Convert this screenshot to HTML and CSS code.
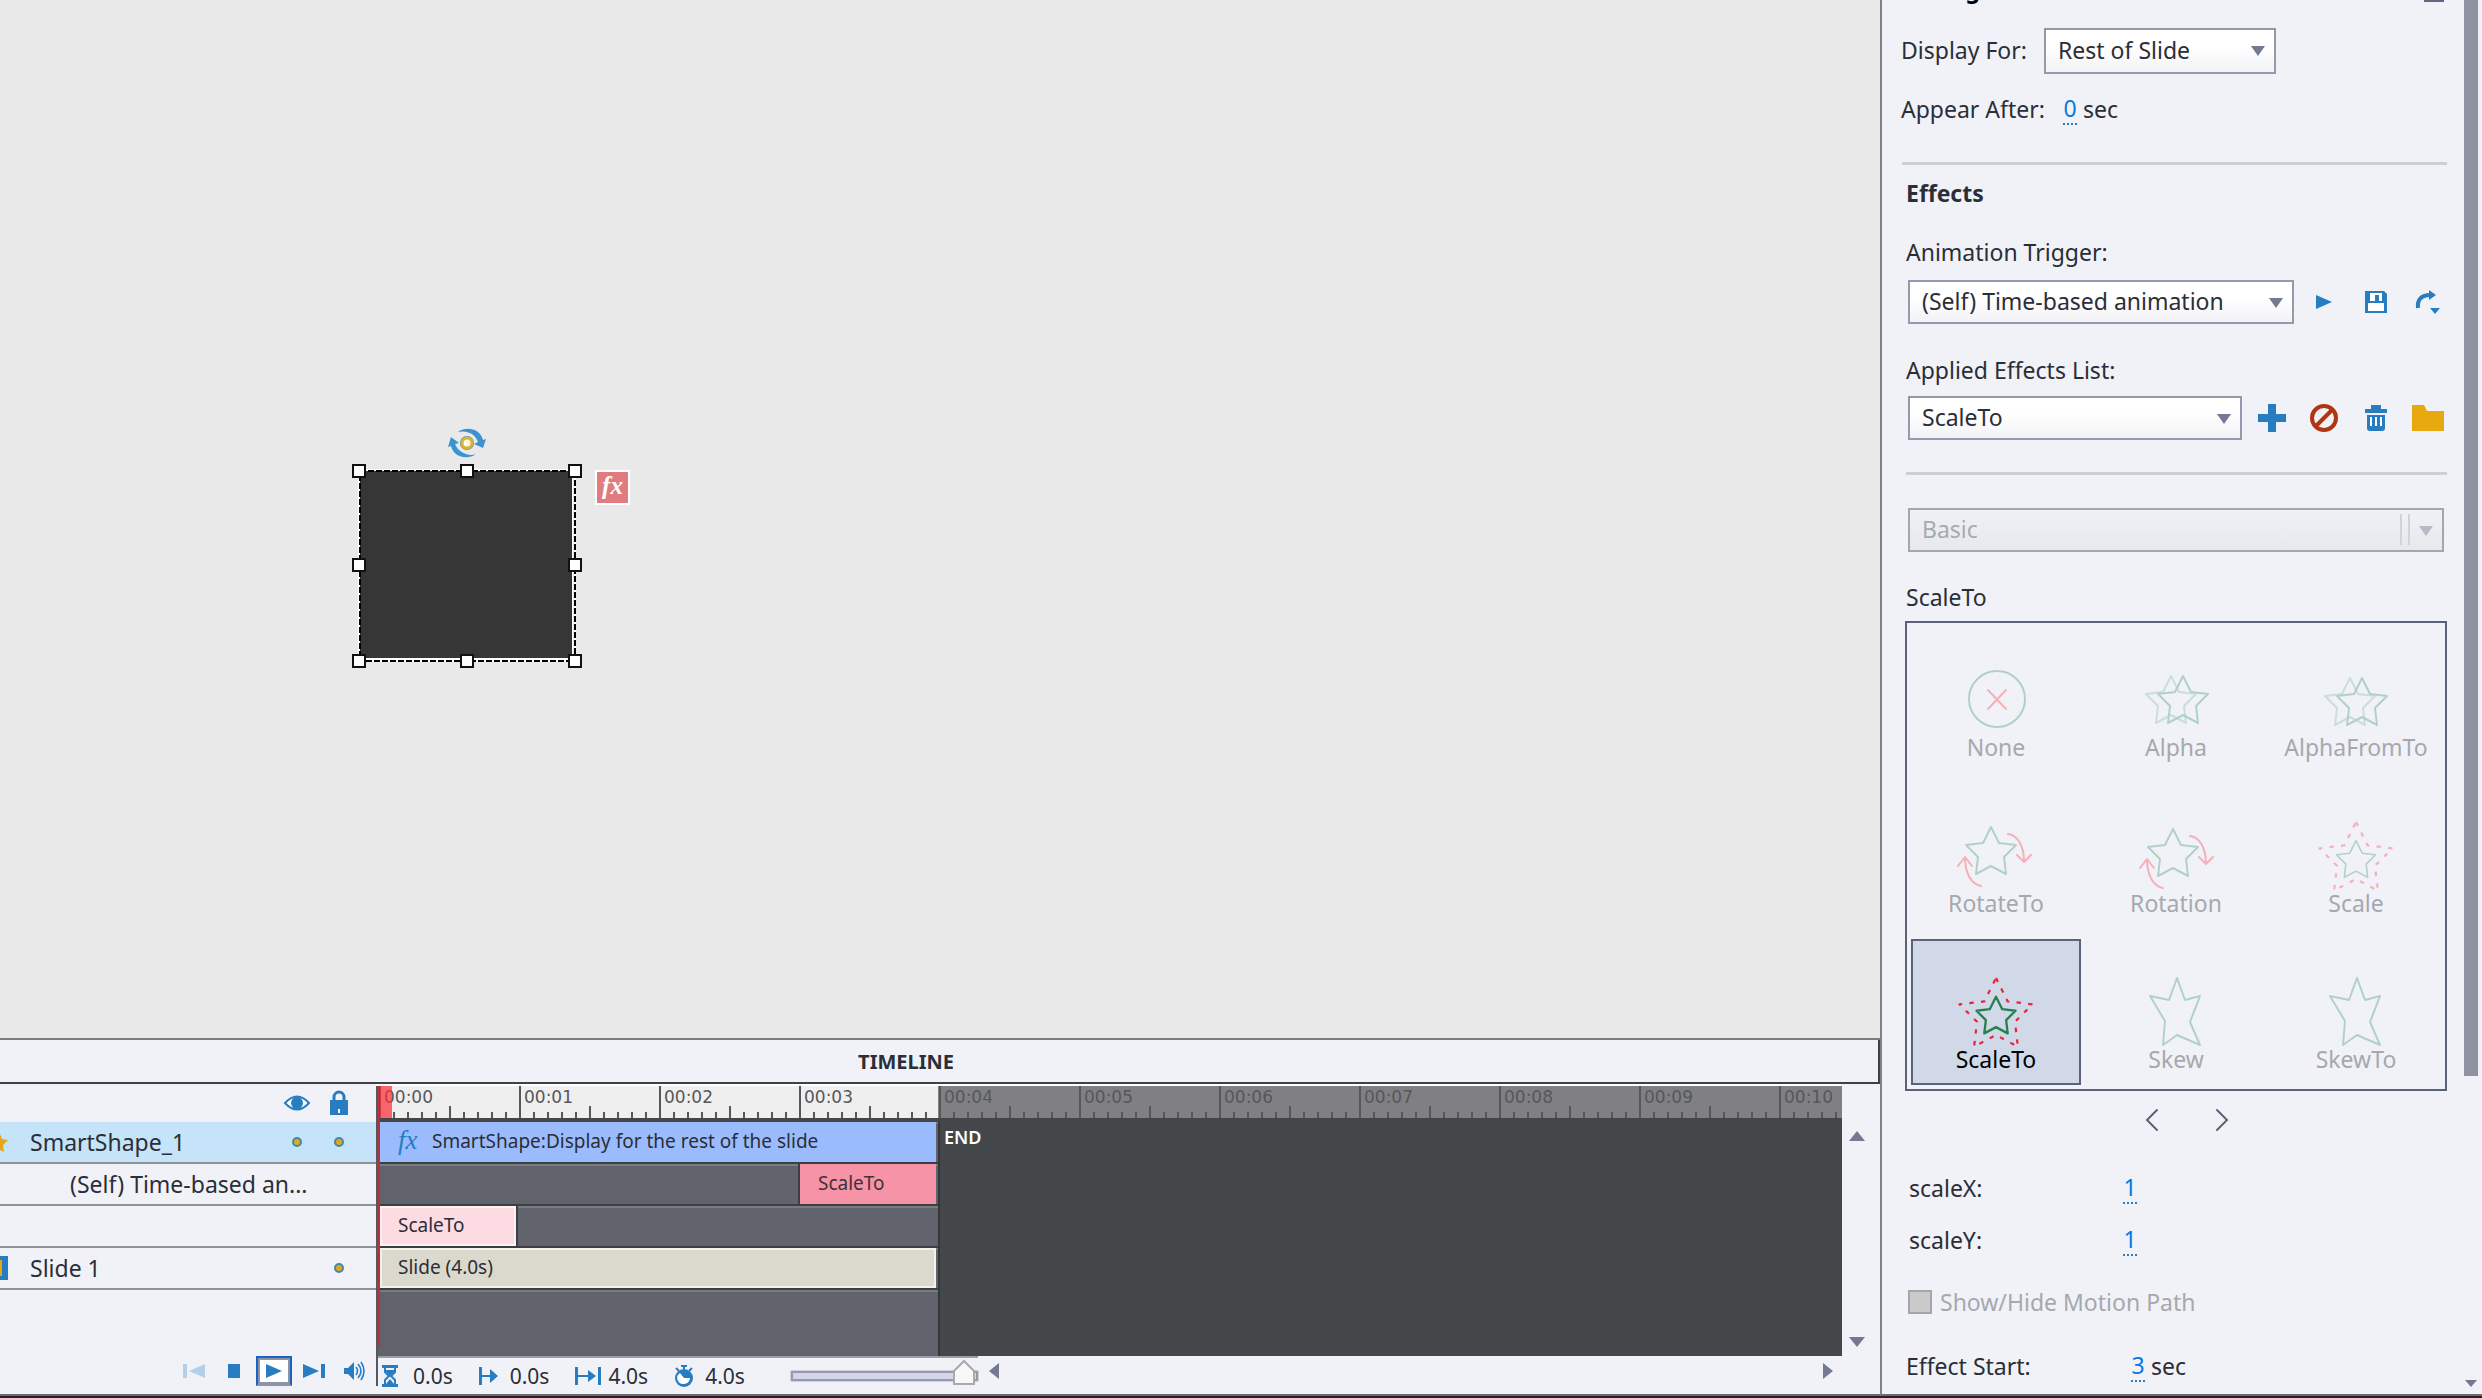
FILE: index.html
```html
<!DOCTYPE html>
<html lang="en">
<head>
<meta charset="utf-8">
<title>Slide editor</title>
<link rel="stylesheet" href="styles.css">
</head>
<body>
<svg class="defs" aria-hidden="true">
  <defs>
    <path id="star" d="M0-26 8-10 25-8 13 4 15 21 0 13-15 21-13 4-25-8-8-10Z"/>
    <g id="spin">
      <path d="M57 49C66 50 73 60 73 77M66 70l7 7 7-7M30 101C20 99 14 88 14 72M7 81l7-9 7 9"/>
    </g>
    <path id="skew" d="M46 37 54 59 69 55 59 81 69 104 46 94 32 104 34 80 19 55 38 59Z"/>
  </defs>
</svg>
<div class="app">
  <main class="workspace">
    <section class="stage">
      <div class="shape">
        <svg class="shape-frame" viewBox="0 0 244 250" aria-hidden="true">
          <rect x="9" y="52" width="215" height="190" fill="#fff"/>
          <rect x="11" y="53" width="212" height="187" fill="#363636"/>
          <rect x="10" y="52" width="216" height="191" fill="none" stroke="#fff" stroke-width="2"/>
          <rect x="11" y="53" width="215" height="190" fill="none" stroke="#000" stroke-width="2" stroke-dasharray="6 2"/>
          <g fill="#fff" stroke="#111" stroke-width="2">
            <rect x="4" y="47" width="12" height="12"/><rect x="112" y="47" width="12" height="12"/><rect x="220" y="47" width="12" height="12"/>
            <rect x="4" y="141" width="12" height="12"/><rect x="220" y="141" width="12" height="12"/>
            <rect x="4" y="237" width="12" height="12"/><rect x="112" y="237" width="12" height="12"/><rect x="220" y="237" width="12" height="12"/>
          </g>
          <g fill="#3b93cf">
            <path d="M109 14c8-6 22-4 25 8l3-1-3 9-9-4 4-2c-3-9-12-12-20-10z"/>
            <path d="M127 36c-8 6-22 4-25-8l-3 1 3-10 8 6-4 1c3 8 13 13 21 10z"/>
          </g>
          <circle cx="118" cy="25" r="5" fill="#fff" stroke="#4d97bf" stroke-width="4"/>
          <circle cx="118" cy="25" r="5" fill="#fffbe6" stroke="#e0b034" stroke-width="3"/>
        </svg>
        <span class="fx-badge">fx</span>
      </div>
    </section>

    <section class="timeline">
      <h2 class="timeline-title">TIMELINE</h2>
      <div class="timeline-body">
        <div class="layers">
          <div class="layers-head">
            <svg width="26" height="16" viewBox="0 0 26 16"><path d="M1 8Q13-5 25 8 13 21 1 8Z" fill="#fff" stroke="#287dc1" stroke-width="2"/><circle cx="13" cy="8" r="6" fill="#287dc1"/></svg>
            <svg width="18" height="24" viewBox="0 0 18 24"><path d="M4 10V6a5 5 0 0 1 10 0v4" fill="none" stroke="#287dc1" stroke-width="3"/><path d="M0 9h18v15H0z" fill="#287dc1"/><path d="M8 18h2v4H8z" fill="#fff"/></svg>
          </div>
          <div class="layer is-selected">
            <svg class="layer-icon" width="8" height="24" viewBox="0 0 8 24"><path d="M0 4 2 9l6 1-5 5 1 7-4-2z" fill="#e6a817"/></svg>
            <span class="layer-name">SmartShape_1</span><i class="dot"></i><i class="dot"></i>
          </div>
          <div class="layer layer-child"><span class="layer-name">(Self) Time-based an...</span></div>
          <div class="layer"></div>
          <div class="layer">
            <svg class="layer-icon" width="8" height="24" viewBox="0 0 8 24"><path d="M0 0h8v24H0z" fill="#287dc1"/><path d="M0 4h2v16H0z" fill="#e6a817"/></svg>
            <span class="layer-name">Slide 1</span><i class="dot"></i>
          </div>
          <div class="transport">
            <button class="t-btn" disabled aria-label="First frame"><svg width="22" height="14" viewBox="0 0 22 14"><path d="M0 0h4v14H0zM22 0v14L6 7z" fill="#b5cfe8"/></svg></button>
            <button class="t-btn" aria-label="Stop"><svg width="12" height="14" viewBox="0 0 12 14"><path d="M0 0h12v14H0z" fill="#287dc1"/></svg></button>
            <button class="t-btn is-focus" aria-label="Play"><svg width="16" height="14" viewBox="0 0 16 14"><path d="M0 0v14l16-7z" fill="#287dc1"/></svg></button>
            <button class="t-btn" aria-label="Last frame"><svg width="22" height="14" viewBox="0 0 22 14"><path d="M18 0h4v14h-4zM0 0v14l16-7z" fill="#287dc1"/></svg></button>
            <button class="t-btn" aria-label="Audio"><svg width="21" height="18" viewBox="0 0 21 18"><path d="M0 6h4l6-6v18l-6-6H0z" fill="#287dc1"/><path d="M12 5q3 4 0 8M14 2q6 7 0 14M17 0q6 9 0 18" fill="none" stroke="#287dc1" stroke-width="1.6"/></svg></button>
          </div>
        </div>

        <div class="tracks">
          <div class="ruler">
            <span>00:00</span><span>00:01</span><span>00:02</span><span>00:03</span><span>00:04</span><span>00:05</span><span>00:06</span><span>00:07</span><span>00:08</span><span>00:09</span><span>00:10</span>
          </div>
          <div class="lanes">
            <div class="lane-stack">
              <div class="lane"><div class="clip clip-shape" style="--start:0;--length:4"><span class="fx">fx</span>SmartShape:Display for the rest of the slide</div></div>
              <div class="lane"><div class="clip clip-effect" style="--start:3;--length:1">ScaleTo</div></div>
              <div class="lane"><div class="clip clip-effect-light" style="--start:0;--length:1">ScaleTo</div></div>
              <div class="lane"><div class="clip clip-slide" style="--start:0;--length:4">Slide (4.0s)</div></div>
              <div class="lane lane-rest"></div>
            </div>
            <span class="end">END</span>
          </div>
          <div class="status">
            <div class="status-info">
              <span class="stat"><svg width="24" height="22" viewBox="0 0 24 22"><path d="M0 0h16v3H0zM0 19h16v3H0z" fill="#287dc1"/><path d="M3 3v4l4 4-4 4v4M13 3v4l-4 4 4 4v4" fill="none" stroke="#287dc1" stroke-width="2"/><path d="M4 5h8v2l-4 4-4-4zM8 14l4 5H4z" fill="#287dc1"/></svg>0.0s</span>
              <span class="stat"><svg width="24" height="18" viewBox="0 0 24 18"><path d="M0 0h3v18H0zM3 8h8V2l8 7-8 7v-6H3z" fill="#287dc1"/></svg>0.0s</span>
              <span class="stat"><svg width="26" height="18" viewBox="0 0 26 18"><path d="M0 0h3v18H0zM23 0h3v18h-3zM3 8h10V3l8 6-8 6v-5H3z" fill="#287dc1"/></svg>4.0s</span>
              <span class="stat"><svg width="24" height="22" viewBox="0 0 24 22"><path d="M7 0h6v2H11v2H9V2H7z" fill="#287dc1"/><path d="m2 3 3 3M18 3l-3 3" stroke="#287dc1" stroke-width="2"/><circle cx="10" cy="13" r="9" fill="#287dc1"/><path d="M10 13h6a6 6 0 0 1-6 6 6 6 0 0 1-4-11z" fill="#fff"/></svg>4.0s</span>
              <input class="zoom" type="range" min="0" max="100" value="100" aria-label="Timeline zoom">
            </div>
            <div class="hscroll">
              <button class="arrow arrow-left" aria-label="Scroll left"></button>
              <button class="arrow arrow-right" aria-label="Scroll right"></button>
            </div>
          </div>
          <div class="playhead"></div>
        </div>

        <div class="vscroll">
          <button class="arrow arrow-up" aria-label="Scroll up"></button>
          <button class="arrow arrow-down" aria-label="Scroll down"></button>
        </div>
      </div>
    </section>
  </main>

  <aside class="panel">
    <div class="panel-content">
      <div class="panel-title"><h3>Timing</h3><button class="collapse" aria-label="Collapse"></button></div>
      <div class="row display-row">
        <label for="display-for">Display For:</label>
        <span class="select select-display"><select id="display-for"><option>Rest of Slide</option></select></span>
      </div>
      <div class="row appear-row">
        <label for="appear-after">Appear After:</label>
        <span class="value"><input id="appear-after" value="0"> sec</span>
      </div>
      <hr>
      <div class="effects">
        <h3>Effects</h3>
        <label class="trigger-label" for="trigger">Animation Trigger:</label>
        <div class="row tools trigger-row">
          <span class="select select-trigger"><select id="trigger"><option>(Self) Time-based animation</option></select></span>
          <button aria-label="Preview"><svg width="16" height="14" viewBox="0 0 16 14"><path d="M0 0v14l16-7z" fill="#287dc1"/></svg></button>
          <button aria-label="Save"><svg width="22" height="22" viewBox="0 0 22 22"><path d="M0 0h19l3 3v19H0z" fill="#287dc1"/><path d="M5 2h12v8H5zM3 12h16v8H3z" fill="#fff"/><path d="M10 4h4v6h-4z" fill="#287dc1"/></svg></button>
          <button aria-label="Reset"><svg width="24" height="24" viewBox="0 0 24 24"><path d="M2 18C1 9 6 5 14 5" fill="none" stroke="#287dc1" stroke-width="4"/><path d="M13 0l7 5-7 5zM14 18h10l-5 6z" fill="#287dc1"/></svg></button>
        </div>
        <label class="applied-label" for="applied">Applied Effects List:</label>
        <div class="row tools applied-row">
          <span class="select select-applied"><select id="applied"><option>ScaleTo</option></select></span>
          <button aria-label="Add"><svg width="28" height="28" viewBox="0 0 28 28"><path d="M10 0h8v10h10v8H18v10h-8V18H0v-8h10z" fill="#287dc1"/></svg></button>
          <button aria-label="Remove"><svg width="28" height="28" viewBox="0 0 28 28"><g fill="none" stroke="#b1360f" stroke-width="4"><circle cx="14" cy="14" r="12"/><path d="M22 6 6 22"/></g></svg></button>
          <button aria-label="Delete"><svg width="22" height="26" viewBox="0 0 22 26"><path d="M6 0h10v4h6v4H0V4h6zM2 10h18v13q0 3-3 3H5q-3 0-3-3z" fill="#287dc1"/><path d="M5 12h2v9H5zM10 12h2v9h-2zM15 12h2v9h-2z" fill="#fff"/></svg></button>
          <button aria-label="Browse"><svg width="32" height="26" viewBox="0 0 32 26"><path d="M0 0h12l3 6h17v20H0z" fill="#e6aa10"/></svg></button>
        </div>
        <hr class="hr-inner">
        <span class="select select-basic is-disabled"><select disabled aria-label="Category"><option>Basic</option></select></span>
        <p class="effect-name">ScaleTo</p>
        <div class="gallery">
          <button class="effect" disabled><svg viewBox="0 0 90 102"><circle class="g" cx="46" cy="70" r="28"/><path class="r" d="m37 61 18 19M55 61 37 80"/></svg>None</button>
          <button class="effect" disabled><svg viewBox="0 0 90 102"><use class="g faint" href="#star" x="40" y="73"/><use class="g" href="#star" x="52" y="73"/></svg>Alpha</button>
          <button class="effect" disabled><svg viewBox="0 0 90 102"><use class="g faint" href="#star" x="39" y="75"/><use class="g" href="#star" x="51" y="75"/></svg>AlphaFromTo</button>
          <button class="effect" disabled><svg viewBox="0 0 90 102"><use class="g" href="#star" x="40" y="68"/><use class="r" href="#spin"/></svg>RotateTo</button>
          <button class="effect" disabled><svg viewBox="0 0 90 102"><use class="g" href="#star" x="42" y="70"/><use class="r" href="#spin" x="2" y="2"/></svg>Rotation</button>
          <button class="effect" disabled><svg viewBox="0 0 90 102"><use class="g" href="#star" transform="translate(45 76) scale(.78)"/><use class="r dash" href="#star" transform="translate(45 75) scale(1.46)"/></svg>Scale</button>
          <button class="effect is-active"><svg viewBox="0 0 90 102"><use class="g" href="#star" transform="translate(45 76) scale(.78)"/><use class="r dash" href="#star" transform="translate(45 75) scale(1.46)"/></svg>ScaleTo</button>
          <button class="effect" disabled><svg viewBox="0 0 90 102"><use class="g" href="#skew"/></svg>Skew</button>
          <button class="effect" disabled><svg viewBox="0 0 90 102"><use class="g" href="#skew"/></svg>SkewTo</button>
        </div>
        <div class="pager">
          <button aria-label="Previous"><svg width="12" height="22" viewBox="0 0 12 22"><path d="M11 1 1 11l10 10"/></svg></button>
          <button aria-label="Next"><svg width="12" height="22" viewBox="0 0 12 22"><path d="m1 1 10 10L1 21"/></svg></button>
        </div>
        <div class="row param param-x"><label for="sx">scaleX:</label><span class="value"><input id="sx" value="1"></span></div>
        <div class="row param param-y"><label for="sy">scaleY:</label><span class="value"><input id="sy" value="1"></span></div>
        <label class="row motion"><input type="checkbox" disabled>Show/Hide Motion Path</label>
        <div class="row start"><label for="start">Effect Start:</label><span class="value"><input id="start" value="3"> sec</span></div>
      </div>
    </div>
    <div class="panel-scroll">
      <div class="thumb"></div>
      <button class="arrow arrow-tiny" aria-label="Scroll down"></button>
    </div>
  </aside>
</div>
</body>
</html>
```
FILE: styles.css
```css
* { box-sizing: border-box; }
body {
  margin: 0;
  background: #f0f2f8;
  color: #2b2e36;
  font: 23px/32px "Noto Sans", "Open Sans", sans-serif;
}
h2, h3, p { margin: 0; font-size: inherit; }
svg { display: block; flex: none; overflow: visible; }
button, input, select { font: inherit; color: inherit; }
button { display: flex; align-items: center; justify-content: center; padding: 0; border: 0; background: none; }
.defs { position: absolute; width: 0; height: 0; }

.app {
  display: grid;
  grid-template-columns: minmax(0, 1fr) 602px;
  height: 100vh;
  overflow: hidden;
  border-bottom: 2px solid #20232f;
}
.workspace { display: flex; flex-direction: column; min-height: 0; border-bottom: 2px solid #6a6c72; }

/* Stage */
.stage { flex: 1; position: relative; background: #e9e9e9; }
.shape { position: absolute; left: 349px; top: 418px; width: 244px; height: 250px; }
.shape-frame { width: 244px; height: 250px; }
.fx-badge {
  position: absolute; left: 246px; top: 52px;
  width: 35px; height: 35px;
  border: 2px solid #fff;
  background: #e07c80;
  color: #fff;
  font: italic bold 25px/27px "Liberation Serif", serif;
  text-align: center;
}

/* Timeline */
.timeline { border-top: 2px solid #7c7c7e; }
.timeline-title {
  height: 44px;
  padding-right: 66px;
  border-bottom: 2px solid #3e4146;
  border-right: 2px solid #3e4146;
  font-size: 20px;
  line-height: 44px;
  text-align: center;
}
.timeline-body { display: grid; grid-template-columns: 376px minmax(0, 1fr) 38px; height: 310px; }
.layers { display: flex; flex-direction: column; }
.layers-head { display: flex; align-items: center; justify-content: flex-end; gap: 20px; height: 38px; padding-right: 28px; }
.layer {
  display: flex; align-items: center;
  height: 42px;
  padding-right: 32px;
  border-bottom: 2px solid #8f9296;
}
.layer.is-selected { background: #c5e3f9; }
.layer-name { flex: 1; padding-left: 22px; }
.layer-child .layer-name { padding-left: 70px; }
.dot { width: 10px; height: 10px; margin-left: 32px; border: 2px solid #4388a8; border-radius: 50%; background: #e0a820; }
.transport { display: flex; align-items: center; gap: 4px; height: 30px; margin-top: 66px; padding-left: 176px; }
.t-btn { width: 36px; height: 30px; }
.t-btn.is-focus { border: 2px solid #1c60c0; border-bottom: 2px solid #8f93a8; box-shadow: inset 0 0 0 2px #8f93a8; background: #fff; }

.tracks { position: relative; display: flex; flex-direction: column; }
.tracks::before { content: ""; position: absolute; left: 0; top: 2px; width: 2px; height: 300px; background: #55585e; }
.ruler {
  display: flex;
  height: 38px;
  padding-left: 3px;
  overflow: hidden;
  border-top: 2px solid #fff;
  border-bottom: 4px solid #444649;
  background:
    repeating-linear-gradient(90deg, #55575a 0 2px, transparent 2px 140px) 3px 0 / 100% 32px no-repeat,
    repeating-linear-gradient(90deg, #55575a 0 2px, transparent 2px 70px) 3px 20px / 100% 12px no-repeat,
    repeating-linear-gradient(90deg, #55575a 0 2px, transparent 2px 14px) 3px 26px / 100% 6px no-repeat,
    linear-gradient(90deg, #efefef 0 562px, #808082 562px);
  background-clip: padding-box;
  color: #55575b;
  font: 17px/22px "DejaVu Sans", sans-serif;
}
.ruler span { flex: 0 0 140px; padding-left: 5px; }
.lanes { display: flex; height: 234px; background: #43474a; }
.lane-stack { flex: 0 0 564px; padding-left: 4px; background: #60636b; border-right: 2px solid #33373c; display: flex; flex-direction: column; }
.lane { height: 42px; border-bottom: 2px solid #3b3e43; box-shadow: inset 0 2px #7a7d80; }
.lane-rest { flex: 1; border: 0; }
.clip {
  display: flex; align-items: center;
  height: 40px;
  margin-left: calc(var(--start) * 140px);
  width: calc(var(--length) * 140px - 4px);
  padding: 0 0 2px 18px;
  font-size: 19px;
  white-space: nowrap;
}
.clip-shape { background: #9abcff; }
.clip-effect { background: #f693a7; color: #43303a; box-shadow: -2px 0 #3b3e43; }
.clip-effect-light { background: #fcdbe2; box-shadow: inset 0 0 0 2px #fff0f3, 2px 0 #3b3e43; }
.clip-slide { background: #dbd8cd; box-shadow: inset 0 0 0 2px #f2f1ec; }
.fx { width: 34px; padding-bottom: 2px; color: #287dc1; font: italic 27px/28px "Liberation Serif", serif; }
.end { padding-left: 4px; color: #fff; font-size: 18px; line-height: 30px; font-weight: 600; }
.playhead { position: absolute; left: 2px; top: 2px; width: 14px; height: 32px; background: #ff2a35b3; }
.playhead::after { content: ""; position: absolute; left: 0; top: 0; width: 2px; height: 260px; background: #b8303a; }

.status { display: flex; height: 38px; font-size: 21px; }
.status-info { display: flex; align-items: center; gap: 26px; flex: 0 0 602px; padding-left: 6px; border-top: 2px solid #9b9ea8; }
.stat { display: flex; align-items: center; gap: 7px; line-height: 34px; }
.zoom { -webkit-appearance: none; appearance: none; width: 187px; height: 26px; margin: 0 0 0 auto; background: none; }
.zoom::-webkit-slider-runnable-track { height: 10px; border: 2px solid #9599b0; border-radius: 1px; background: #d3d7e8; box-shadow: 0 0 0 1px #cfd0d8; }
.zoom::-webkit-slider-thumb {
  -webkit-appearance: none;
  width: 24px; height: 26px; margin-top: -14px;
  background: url("data:image/svg+xml,%3Csvg xmlns='http://www.w3.org/2000/svg' viewBox='0 0 24 26'%3E%3Cpath d='M2 25V12L12 2l10 10v13z' fill='%23f8f8f8' stroke='%23aaa' stroke-width='2'/%3E%3C/svg%3E");
}
.hscroll { flex: 1; display: flex; justify-content: space-between; padding: 7px 9px 0 11px; }
.vscroll { display: flex; flex-direction: column; justify-content: space-between; padding: 47px 0 47px 7px; }
.arrow { background: #737993; }
.arrow-left { width: 10px; height: 16px; clip-path: polygon(100% 0, 100% 100%, 0 50%); }
.arrow-right { width: 10px; height: 16px; clip-path: polygon(0 0, 100% 50%, 0 100%); }
.arrow-up { width: 16px; height: 10px; clip-path: polygon(50% 0, 100% 100%, 0 100%); }
.arrow-down { width: 16px; height: 10px; clip-path: polygon(0 0, 100% 0, 50% 100%); }
.arrow-tiny { width: 12px; height: 7px; clip-path: polygon(0 0, 100% 0, 50% 100%); }

/* Properties panel */
.panel { display: flex; min-height: 0; border-left: 2px solid #808187; border-bottom: 2px solid #6a6c72; overflow: hidden; }
.panel-content { flex: 1; min-width: 0; padding: 0 17px 0 19px; }
.panel-title { display: flex; align-items: flex-end; justify-content: space-between; margin-top: -27px; color: #000; }
.collapse { width: 20px; height: 4px; margin: 0 3px 3px 0; background: #636880; }
.row { display: flex; align-items: center; }
.display-row { margin-top: 23px; }
.display-row label { width: 143px; padding-bottom: 3px; }
.appear-row { margin-top: 19px; }
.appear-row label { width: 162px; }
hr { height: 3px; margin: 37px 0 0 1px; border: 0; background: #cdcfd8; }
.effects { display: flex; flex-direction: column; padding: 12px 0 0 5px; }
.trigger-label { margin-top: 27px; }
.trigger-row { margin-top: 12px; }
.applied-label { margin-top: 30px; }
.applied-row { margin-top: 10px; }
.tools { padding: 0 3px 0 2px; }
.tools button { width: 32px; height: 32px; margin-left: 20px; }
.tools .select + button { margin-left: auto; }
.hr-inner { margin: 32px 0 0; }

.select { position: relative; display: flex; height: 44px; }
.select select {
  -webkit-appearance: none; appearance: none;
  width: 100%;
  padding: 0 36px 3px 12px;
  border: 2px solid #9599ad;
  border-radius: 0;
  background: linear-gradient(#fff 40%, #f2f3f7);
  opacity: 1;
}
.select::after {
  content: ""; position: absolute; right: 11px; top: 18px;
  width: 14px; height: 10px;
  background: #737993;
  clip-path: polygon(0 0, 100% 0, 50% 100%);
}
.select-display { width: 232px; height: 46px; }
.select-trigger { width: 386px; }
.select-applied { width: 334px; }
.select-basic { margin: 33px 3px 0 2px; }
.select.is-disabled select { border-color: #a4a6ac; background: linear-gradient(#f0f1f6, #e7e8ec); color: #a8aaaf; }
.select.is-disabled::after { background: #b5b9c8; }
.select.is-disabled::before {
  content: ""; position: absolute; right: 34px; top: 6px;
  width: 6px; height: 31px;
  border: solid #d2d3d8; border-width: 0 2px;
}
.effect-name { margin-top: 29px; }

.gallery {
  display: grid;
  grid-template-columns: repeat(3, 170px);
  justify-content: space-between;
  gap: 10px 0;
  height: 470px;
  margin: 8px 0 0 -1px;
  padding: 4px;
  border: 2px solid #5b6378;
}
.effect { flex-direction: column; justify-content: flex-start; height: 146px; border: 2px solid transparent; color: #a6a8ad; }
.effect svg { width: 90px; height: 102px; fill: none; stroke-width: 2; stroke-linejoin: round; stroke-linecap: round; }
.effect.is-active { border-color: #5b6378; background: #d1d9e8; color: #000; }
.g { stroke: #b2d1c6; }
.r { stroke: #f5b0b8; }
.faint { opacity: .6; }
.is-active .g { stroke: #2a7f52; stroke-width: 3; }
.is-active .r { stroke: #e8243a; }
.dash { stroke-width: 1.5; stroke-dasharray: 3 5; stroke-linecap: butt; }
.effect.is-active .dash { stroke-width: 1.5; }

.pager { display: flex; justify-content: center; gap: 58px; margin-top: 18px; padding-left: 20px; }
.pager svg { fill: none; stroke: #5b6078; stroke-width: 2; stroke-linecap: round; }
.value { display: flex; white-space: pre; }
.value input {
  width: 14px; height: 32px; padding: 0;
  border: 0;
  border-bottom: 2px dotted #287dc1;
  border-radius: 0;
  background: none;
  color: #0a78dc;
  line-height: 30px;
  text-align: center;
}
.param { padding-left: 3px; }
.param label { width: 214px; }
.param-x { margin-top: 41px; }
.param-y { margin-top: 20px; }
.motion { gap: 8px; margin-top: 30px; padding-left: 2px; color: #a6a8ad; }
.motion input { -webkit-appearance: none; appearance: none; width: 24px; height: 24px; margin: 0; border: 2px solid #a5a6a8; background: #cacaca; }
.start { margin-top: 32px; }
.start label { width: 225px; }
.panel-scroll { flex: none; display: flex; flex-direction: column; justify-content: space-between; align-items: center; width: 14px; margin-right: 4px; padding-bottom: 7px; }
.thumb { width: 14px; height: 1076px; background: #8f92a1; }
```
